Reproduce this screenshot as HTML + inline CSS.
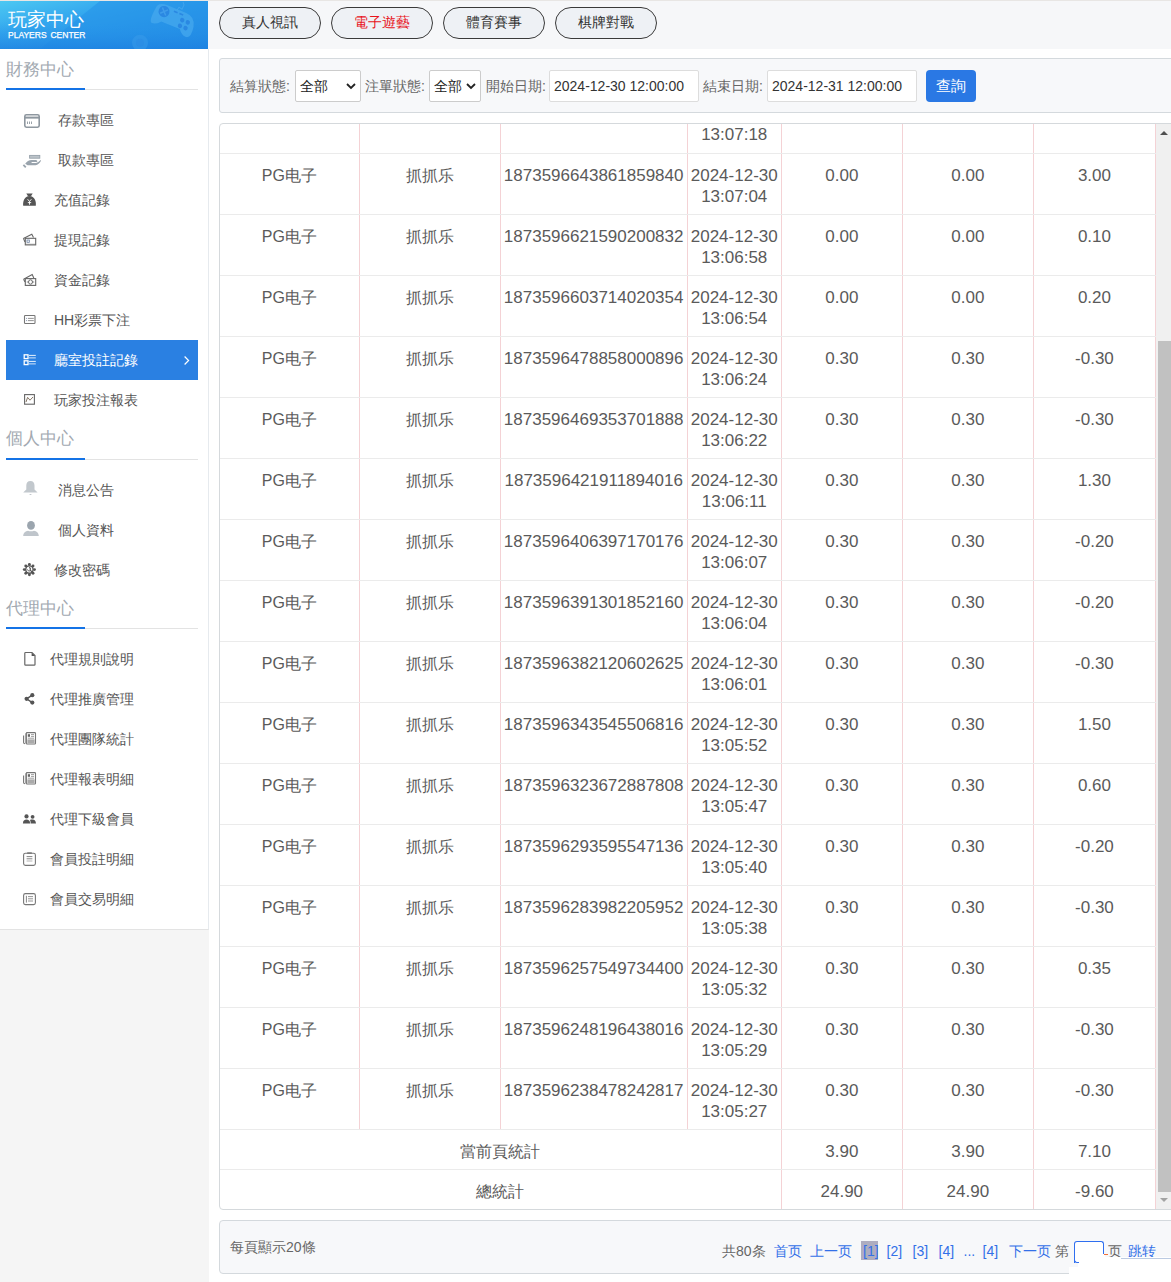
<!DOCTYPE html>
<html><head><meta charset="utf-8">
<style>
*{margin:0;padding:0;box-sizing:border-box}
html,body{width:1171px;height:1282px;overflow:hidden;background:#fff;font-family:"Liberation Sans",sans-serif;color:#555}
.abs{position:absolute}
#topline{left:0;top:0;width:1171px;height:1px;background:#e8e6e4}
#logo{left:0;top:1px;width:208px;height:48px;background:#2a8ee6;overflow:hidden}
#logo .t1{position:absolute;left:8px;top:8px;font-size:19px;color:#fff;line-height:22px;letter-spacing:0px}
#logo .t2{position:absolute;left:8px;top:29px;font-size:8.5px;color:#fff;line-height:10px;word-spacing:1.5px;-webkit-text-stroke:0.25px #fff}
#nav{left:208px;top:1px;width:963px;height:48px;background:#f6f7f9}
.pill{position:absolute;top:6px;width:102px;height:32px;border:1px solid #3a3a3a;border-radius:16px;background:#eef1f5;font-size:14px;line-height:29px;text-align:center;color:#333}
#side{left:0;top:49px;width:209px;height:881px;background:#fff;border-right:1px solid #e6eaee;border-bottom:1px solid #e3e3e3}
#sidebot{left:0;top:930px;width:209px;height:352px;background:#f5f5f5}
#main{left:209px;top:48px;width:962px;height:1234px;background:#fff}
.sec{position:absolute;left:6px;font-size:17px;color:#a2a9b1;line-height:20px}
.secline{position:absolute;left:6px;width:192px;height:2px;border-bottom:1px solid #e3e3e3}
.secline i{position:absolute;left:0;top:0;width:79px;height:2px;background:#1473e6}
.it{position:absolute;left:0;width:208px;height:20px;font-size:14px;line-height:20px;color:#555}
.it span{position:absolute;top:0}
.it svg{position:absolute}
#active{left:6px;top:340px;width:192px;height:40px;background:#2a80e2}
#filter{left:219px;top:58px;width:960px;height:55px;background:#f7f8fa;border:1px solid #d4d9dd;border-radius:3px}
.lbl{position:absolute;top:19px;font-size:14px;line-height:16px;color:#666}
.sel{position:absolute;top:11px;height:32px;border:1px solid #ccc;border-radius:2px;background:#fff;font-size:14px;line-height:30px;color:#222;padding-left:4px}
.inp{position:absolute;top:11px;width:150px;height:32px;border:1px solid #ddd;border-radius:2px;background:#fff;font-size:14px;line-height:30px;color:#333;padding-left:4px}
#btn{position:absolute;left:706px;top:11px;width:50px;height:32px;border-radius:4px;background:#2a78e4;color:#fff;font-size:15px;line-height:32px;text-align:center}
#tbox{left:219px;top:123px;width:970px;height:1087px;border:1px solid #d5d9dc;border-radius:4px;overflow:hidden;background:#fff}
#tinner{position:absolute;left:0;top:-32px;width:936px}
table{border-collapse:collapse;table-layout:fixed;width:936px}
td{border-right:1px solid #f4d2d5;border-bottom:1px solid #ebebeb;text-align:center;font-size:16px;line-height:21px;color:#5a5a5a;padding:0}
tr.r td{height:61px;vertical-align:top;padding-top:11px}
tr.s td{height:40px;vertical-align:top;padding-top:11px}
.n{font-size:17px}
#sb{left:1156px;top:124px;width:15px;height:1085px;background:#f0f0f0}
#thumb{left:1158px;top:341px;width:13px;height:851px;background:#c1c1c1}
#pager{left:219px;top:1220px;width:970px;height:54px;background:#f7f8fa;border:1px solid #d4d9dd;border-radius:4px}
.pg{position:absolute;top:22px;font-size:14px;line-height:16px;color:#666}
.lk{color:#3370e8}
</style></head><body>
<div class="abs" id="topline"></div>
<div class="abs" id="logo">
  <svg class="abs" style="left:0;top:0" width="208" height="48" viewBox="0 0 208 47" preserveAspectRatio="none">
    <defs><linearGradient id="lg" x1="0" y1="0" x2="1" y2="1"><stop offset="0" stop-color="#4cc8f2"/><stop offset="0.35" stop-color="#33a6ee"/><stop offset="1" stop-color="#1f7fe0"/></linearGradient>
    <linearGradient id="lg2" x1="0" y1="0" x2="0" y2="1"><stop offset="0" stop-color="#2798ea" stop-opacity="0"/><stop offset="1" stop-color="#1c7ee0" stop-opacity="0.6"/></linearGradient></defs>
    <rect width="208" height="47" fill="url(#lg)"/>
    <polygon points="100,0 208,0 208,47 40,47" fill="#2492e8" opacity="0.55"/>
    <rect y="20" width="208" height="27" fill="url(#lg2)"/>
    <g transform="rotate(22 172 20)">
      <path d="M152,14 q0,-7 10,-7 h20 q10,0 12,10 q2,12 -4,12 q-4,0 -8,-5 h-20 q-4,5 -8,5 q-4,0 -2,-15z" fill="#46a8ee" opacity="0.75"/>
      <circle cx="161" cy="14" r="5.5" fill="#2a88e2"/>
      <path d="M158,11 l6,6 M164,11 l-6,6" stroke="#3e9cea" stroke-width="1.5"/>
      <path d="M170,10 h4 M176,10 h4" stroke="#2a88e2" stroke-width="1.6"/>
      <circle cx="181" cy="15" r="2.2" fill="#2a88e2"/><circle cx="187" cy="15" r="2.2" fill="#2a88e2"/>
      <circle cx="181" cy="21" r="2.2" fill="#2a88e2"/><circle cx="187" cy="21" r="2.2" fill="#2a88e2"/>
    </g>
    <path d="M177,9 l2,-3 l3,2 l2,-4 l-1,-3" fill="none" stroke="#4aa8ee" stroke-width="1" opacity="0.7"/>
    <circle cx="140" cy="41" r="8" fill="#3a9cea" opacity="0.5"/>
    <circle cx="140" cy="41" r="4" fill="#2a8ae4" opacity="0.5"/>
  </svg>
  <div class="t1">玩家中心</div>
  <div class="t2">PLAYERS CENTER</div>
</div>
<div class="abs" id="nav">
  <div class="pill" style="left:11px">真人視訊</div>
  <div class="pill" style="left:123px;color:#e8141b">電子遊藝</div>
  <div class="pill" style="left:235px">體育賽事</div>
  <div class="pill" style="left:347px">棋牌對戰</div>
</div>
<div class="abs" id="side"></div>
<div class="abs" id="sidebot"></div>
<div class="sec" style="top:60px">財務中心</div>
<div class="secline" style="top:88px"><i></i></div>
<div class="abs" id="active"></div>
<div class="it" style="top:110px"><span style="left:58px">存款專區</span></div>
<div class="it" style="top:150px"><span style="left:58px">取款專區</span></div>
<div class="it" style="top:190px"><span style="left:54px">充值記錄</span></div>
<div class="it" style="top:230px"><span style="left:54px">提現記錄</span></div>
<div class="it" style="top:270px"><span style="left:54px">資金記錄</span></div>
<div class="it" style="top:310px"><span style="left:54px">HH彩票下注</span></div>
<div class="it" style="top:350px;color:#fff"><span style="left:54px">廳室投註記錄</span></div>
<div class="it" style="top:390px"><span style="left:54px">玩家投注報表</span></div>
<div class="sec" style="top:429px">個人中心</div>
<div class="secline" style="top:458px"><i></i></div>
<div class="it" style="top:480px"><span style="left:58px">消息公告</span></div>
<div class="it" style="top:520px"><span style="left:58px">個人資料</span></div>
<div class="it" style="top:560px"><span style="left:54px">修改密碼</span></div>
<div class="sec" style="top:599px">代理中心</div>
<div class="secline" style="top:627px"><i></i></div>
<div class="it" style="top:649px"><span style="left:50px">代理規則說明</span></div>
<div class="it" style="top:689px"><span style="left:50px">代理推廣管理</span></div>
<div class="it" style="top:729px"><span style="left:50px">代理團隊統計</span></div>
<div class="it" style="top:769px"><span style="left:50px">代理報表明細</span></div>
<div class="it" style="top:809px"><span style="left:50px">代理下級會員</span></div>
<div class="it" style="top:849px"><span style="left:50px">會員投註明細</span></div>
<div class="it" style="top:889px"><span style="left:50px">會員交易明細</span></div>
<svg class="abs" style="left:0;top:0" width="208" height="930" viewBox="0 0 208 930">
 <!-- card -->
 <rect x="24.8" y="114.8" width="14.4" height="12.4" rx="1.6" fill="none" stroke="#8e979f" stroke-width="1.6"/>
 <rect x="24.8" y="116.6" width="14.4" height="2" fill="#8e979f"/>
 <path d="M27.5 121.5v2.5M29.5 121.5v2.5M31.5 121.5v2.5" stroke="#8e979f" stroke-width="0.9"/>
 <!-- hand -->
 <rect x="29.6" y="155.4" width="10.2" height="2.8" fill="#bcc3c9" stroke="#97a2ab" stroke-width="0.9"/>
 <path d="M25.2 163.8 Q27.6 160 31.6 159.9 H36.2 Q38.2 160.6 37 162 H31.6 V162.9 H36 Q38.4 162.6 40.6 160 L41 160.8 Q39 164.8 35.6 165.2 H27.6z" fill="#9aa4ad"/>
 <path d="M23.4 164.9 l2.4 2.4" stroke="#9aa4ad" stroke-width="1.8"/>
 <!-- money bag -->
 <path d="M26.3 193.4 h6.4 l-1.6 2.6 h-3.2z" fill="#555"/>
 <path d="M29.5 196 C24.5 196.3 22.6 201.2 23.2 205.8 h12.6 C36.4 201.2 34.5 196.3 29.5 196z" fill="#555"/>
 <path d="M27.6 199.2 l1.9 2.3 1.9-2.3 M29.5 201.5 v3.2 M27.8 202.6 h3.4" fill="none" stroke="#fff" stroke-width="0.9"/>
 <!-- withdraw cards -->
 <path d="M23.4 238.4 L31.8 234.2 L33.5 237.6" fill="none" stroke="#666" stroke-width="1.1"/>
 <path d="M23.4 238.4 L25 242" fill="none" stroke="#666" stroke-width="1.1"/>
 <rect x="25.3" y="238.3" width="10.4" height="6.6" fill="#fff" stroke="#666" stroke-width="1.1"/>
 <rect x="27" y="240" width="2.3" height="2.3" fill="none" stroke="#6a7fa0" stroke-width="0.8"/>
 <path d="M26 244.3h9.2" stroke="#888" stroke-width="0.9"/>
 <!-- fund cards -->
 <path d="M23.6 279.2 L32.2 274.6 L33.8 278" fill="none" stroke="#666" stroke-width="1.1"/>
 <path d="M23.6 279.2 L25 282" fill="none" stroke="#666" stroke-width="1.1"/>
 <rect x="25.3" y="278.6" width="10.4" height="6.8" fill="#fff" stroke="#666" stroke-width="1.1"/>
 <ellipse cx="30.5" cy="282" rx="2" ry="2.2" fill="none" stroke="#666" stroke-width="1"/>
 <path d="M26.8 282h1.2M33 282h1.2" stroke="#777" stroke-width="0.9"/>
 <!-- lottery list -->
 <rect x="24.5" y="315.5" width="10.5" height="8" rx="0.8" fill="none" stroke="#777" stroke-width="1.1"/>
 <path d="M28 318.4h5.8M28 320.6h5.8" stroke="#888" stroke-width="0.9"/>
 <path d="M26.2 318.4h0.9M26.2 320.6h0.9" stroke="#6a7fa0" stroke-width="0.9"/>
 <!-- active list -->
 <rect x="24.2" y="354.8" width="3.8" height="3.8" fill="none" stroke="#fff" stroke-width="1.3"/>
 <rect x="24.2" y="360.8" width="3.8" height="3.8" fill="none" stroke="#fff" stroke-width="1.3"/>
 <path d="M29 355.4h6.8M29 361.4h6.8" stroke="#fff" stroke-width="0.9"/>
 <path d="M29 357.9h6.8M29 363.9h6.8" stroke="#e6effa" stroke-width="0.9"/>
 <path d="M184.6 356.5 l4 4 -4 4" fill="none" stroke="#fff" stroke-width="1.2"/>
 <!-- chart -->
 <rect x="24.6" y="394.6" width="9.8" height="9.6" fill="none" stroke="#666" stroke-width="1.1"/>
 <path d="M26 402 L27.6 397.4 L30 400.2 L33 397" fill="none" stroke="#776655" stroke-width="0.9"/>
 <!-- bell -->
 <path d="M30.4 481 C27.6 481 26.3 483 26.3 485.5 V489.6 L23.2 492.4 H37.6 L34.5 489.6 V485.5 C34.5 483 33.2 481 30.4 481z" fill="#c2c8cd"/>
 <path d="M29 494 h3 l-1.5 1z" fill="#b8bec4"/>
 <!-- person -->
 <ellipse cx="31" cy="525.4" rx="3.9" ry="4.4" fill="#9ba5ae"/>
 <path d="M23.2 536 C23.4 532.6 25.5 531.4 28 530.8 Q31 531.8 34 530.8 C36.5 531.4 38.6 532.6 38.8 536z" fill="#bfc5cb"/>
 <!-- gear -->
 <circle cx="34.50" cy="569.60" r="1.45" fill="#555"/><circle cx="33.01" cy="573.21" r="1.45" fill="#555"/><circle cx="29.40" cy="574.70" r="1.45" fill="#555"/><circle cx="25.79" cy="573.21" r="1.45" fill="#555"/><circle cx="24.30" cy="569.60" r="1.45" fill="#555"/><circle cx="25.79" cy="565.99" r="1.45" fill="#555"/><circle cx="29.40" cy="564.50" r="1.45" fill="#555"/><circle cx="33.01" cy="565.99" r="1.45" fill="#555"/>
 <circle cx="29.4" cy="569.6" r="3.7" fill="#fff" stroke="#555" stroke-width="1.4"/>
 <path d="M29.2 567.4 q1.8 0.9 0.9 2.6 l3.6 3.8" fill="none" stroke="#555" stroke-width="1.2"/>
 <path d="M27.4 569.4 q0.4 2 2.6 1.6" fill="none" stroke="#666" stroke-width="1"/>
 <!-- doc -->
 <path d="M25.6 652.5 H32 L35 655.5 V664.4 Q35 665.2 34.2 665.2 H25.6 Q24.8 665.2 24.8 664.4 V653.3 Q24.8 652.5 25.6 652.5z" fill="none" stroke="#666" stroke-width="1.2"/>
 <path d="M31.6 652.5 V655.9 H35z" fill="#555"/>
 <!-- share -->
 <circle cx="32.3" cy="695.2" r="2.1" fill="#555"/>
 <circle cx="26.6" cy="698.8" r="2.1" fill="#555"/>
 <circle cx="32.3" cy="702.6" r="2.1" fill="#555"/>
 <path d="M32.3 695.2 L26.6 698.8 L32.3 702.6" fill="none" stroke="#555" stroke-width="1.4"/>
 <!-- newspaper x2 -->
 <g id="np">
 <path d="M26 733.2 V743.6 M23.6 735.4 V742.6 Q23.6 743.8 25 743.8" fill="none" stroke="#777" stroke-width="1.1"/>
 <rect x="26.3" y="732.6" width="9.2" height="11.4" rx="0.8" fill="none" stroke="#777" stroke-width="1.1"/>
 <rect x="27.8" y="734.2" width="2.2" height="2.6" fill="#666"/>
 <path d="M31 734.6h3M31 736.4h3M27.8 738.2h6.2" stroke="#888" stroke-width="0.8"/>
 <rect x="27.4" y="739.4" width="7.2" height="3.8" fill="#aaa"/>
 </g>
 <use href="#np" transform="translate(0 40)"/>
 <!-- people -->
 <circle cx="26.5" cy="816.4" r="2.1" fill="#555"/>
 <circle cx="32.6" cy="816.8" r="1.9" fill="#555"/>
 <path d="M22.9 823.4 C23 820.4 24.4 819.4 26.5 819.4 C28.6 819.4 30 820.4 30.1 823.4z" fill="#555"/>
 <path d="M30.6 823.4 C30.7 821.4 30.4 820.6 29.9 819.9 C30.6 819.4 31.5 819.4 32.6 819.4 C34.6 819.4 35.8 820.6 36 823.4z" fill="#555"/>
 <!-- clipboard -->
 <rect x="23.6" y="853.2" width="11.8" height="12.2" rx="1.8" fill="none" stroke="#777" stroke-width="1.1"/>
 <rect x="27.2" y="852.3" width="4.6" height="1.6" fill="#777"/>
 <path d="M26.6 856.6h5.8M26.6 858.8h5.8" stroke="#777" stroke-width="0.9"/>
 <path d="M26.6 861h5.8" stroke="#aaa" stroke-width="0.9"/>
 <!-- list box -->
 <rect x="23.6" y="893.6" width="11.8" height="11" rx="1.8" fill="none" stroke="#777" stroke-width="1.1"/>
 <path d="M26.4 895.8v6.8" stroke="#777" stroke-width="0.9"/>
 <path d="M28 896.6h5M28 898.8h5M28 901h5" stroke="#888" stroke-width="0.9"/>
</svg>
<div class="abs" id="filter">
  <div class="lbl" style="left:10px">結算狀態:</div>
  <div class="sel" style="left:75px;width:66px">全部<svg style="position:absolute;left:50px;top:12px" width="10" height="7" viewBox="0 0 10 7"><path d="M1 1l4 4 4-4" fill="none" stroke="#222" stroke-width="1.8"/></svg></div>
  <div class="lbl" style="left:145px">注單狀態:</div>
  <div class="sel" style="left:209px;width:52px">全部<svg style="position:absolute;left:36px;top:12px" width="10" height="7" viewBox="0 0 10 7"><path d="M1 1l4 4 4-4" fill="none" stroke="#222" stroke-width="1.8"/></svg></div>
  <div class="lbl" style="left:266px">開始日期:</div>
  <div class="inp" style="left:329px">2024-12-30 12:00:00</div>
  <div class="lbl" style="left:483px">結束日期:</div>
  <div class="inp" style="left:547px">2024-12-31 12:00:00</div>
  <div id="btn">查詢</div>
</div>
<div class="abs" id="tbox"><div id="tinner"><table>
<colgroup><col style="width:139px"><col style="width:141px"><col style="width:187px"><col style="width:94px"><col style="width:121px"><col style="width:131px"><col style="width:122px"></colgroup>
<tr class="r"><td></td><td></td><td></td><td class="n">2024-12-30<br>13:07:18</td><td></td><td></td><td></td></tr>
<tr class="r"><td>PG电子</td><td>抓抓乐</td><td class="n">1873596643861859840</td><td class="n">2024-12-30<br>13:07:04</td><td class="n">0.00</td><td class="n">0.00</td><td class="n">3.00</td></tr>
<tr class="r"><td>PG电子</td><td>抓抓乐</td><td class="n">1873596621590200832</td><td class="n">2024-12-30<br>13:06:58</td><td class="n">0.00</td><td class="n">0.00</td><td class="n">0.10</td></tr>
<tr class="r"><td>PG电子</td><td>抓抓乐</td><td class="n">1873596603714020354</td><td class="n">2024-12-30<br>13:06:54</td><td class="n">0.00</td><td class="n">0.00</td><td class="n">0.20</td></tr>
<tr class="r"><td>PG电子</td><td>抓抓乐</td><td class="n">1873596478858000896</td><td class="n">2024-12-30<br>13:06:24</td><td class="n">0.30</td><td class="n">0.30</td><td class="n">-0.30</td></tr>
<tr class="r"><td>PG电子</td><td>抓抓乐</td><td class="n">1873596469353701888</td><td class="n">2024-12-30<br>13:06:22</td><td class="n">0.30</td><td class="n">0.30</td><td class="n">-0.30</td></tr>
<tr class="r"><td>PG电子</td><td>抓抓乐</td><td class="n">1873596421911894016</td><td class="n">2024-12-30<br>13:06:11</td><td class="n">0.30</td><td class="n">0.30</td><td class="n">1.30</td></tr>
<tr class="r"><td>PG电子</td><td>抓抓乐</td><td class="n">1873596406397170176</td><td class="n">2024-12-30<br>13:06:07</td><td class="n">0.30</td><td class="n">0.30</td><td class="n">-0.20</td></tr>
<tr class="r"><td>PG电子</td><td>抓抓乐</td><td class="n">1873596391301852160</td><td class="n">2024-12-30<br>13:06:04</td><td class="n">0.30</td><td class="n">0.30</td><td class="n">-0.20</td></tr>
<tr class="r"><td>PG电子</td><td>抓抓乐</td><td class="n">1873596382120602625</td><td class="n">2024-12-30<br>13:06:01</td><td class="n">0.30</td><td class="n">0.30</td><td class="n">-0.30</td></tr>
<tr class="r"><td>PG电子</td><td>抓抓乐</td><td class="n">1873596343545506816</td><td class="n">2024-12-30<br>13:05:52</td><td class="n">0.30</td><td class="n">0.30</td><td class="n">1.50</td></tr>
<tr class="r"><td>PG电子</td><td>抓抓乐</td><td class="n">1873596323672887808</td><td class="n">2024-12-30<br>13:05:47</td><td class="n">0.30</td><td class="n">0.30</td><td class="n">0.60</td></tr>
<tr class="r"><td>PG电子</td><td>抓抓乐</td><td class="n">1873596293595547136</td><td class="n">2024-12-30<br>13:05:40</td><td class="n">0.30</td><td class="n">0.30</td><td class="n">-0.20</td></tr>
<tr class="r"><td>PG电子</td><td>抓抓乐</td><td class="n">1873596283982205952</td><td class="n">2024-12-30<br>13:05:38</td><td class="n">0.30</td><td class="n">0.30</td><td class="n">-0.30</td></tr>
<tr class="r"><td>PG电子</td><td>抓抓乐</td><td class="n">1873596257549734400</td><td class="n">2024-12-30<br>13:05:32</td><td class="n">0.30</td><td class="n">0.30</td><td class="n">0.35</td></tr>
<tr class="r"><td>PG电子</td><td>抓抓乐</td><td class="n">1873596248196438016</td><td class="n">2024-12-30<br>13:05:29</td><td class="n">0.30</td><td class="n">0.30</td><td class="n">-0.30</td></tr>
<tr class="r"><td>PG电子</td><td>抓抓乐</td><td class="n">1873596238478242817</td><td class="n">2024-12-30<br>13:05:27</td><td class="n">0.30</td><td class="n">0.30</td><td class="n">-0.30</td></tr>
<tr class="s"><td colspan="4">當前頁統計</td><td class="n">3.90</td><td class="n">3.90</td><td class="n">7.10</td></tr>
<tr class="s"><td colspan="4">總統計</td><td class="n">24.90</td><td class="n">24.90</td><td class="n">-9.60</td></tr></table></div></div>
<div class="abs" id="sb"></div>
<div class="abs" id="thumb"></div>
<svg class="abs" style="left:1160px;top:130px" width="8" height="6" viewBox="0 0 8 6"><path d="M0 5h8L4 1z" fill="#505050"/></svg>
<svg class="abs" style="left:1160px;top:1197px" width="8" height="6" viewBox="0 0 8 6"><path d="M0 1h8L4 5z" fill="#a3a3a3"/></svg>
<div class="abs" id="pager">
  <div class="pg" style="left:10px;top:18px">每頁顯示20條</div>
  <div class="pg" style="left:502px">共80条</div>
  <div class="pg lk" style="left:554px">首页</div>
  <div class="pg lk" style="left:590px">上一页</div>
  <div class="abs" style="left:641px;top:20px;width:17px;height:19px;background:#aeadbf"></div>
  <div class="pg lk" style="left:643px">[1]</div>
  <div class="pg lk" style="left:666.5px">[2]</div>
  <div class="pg lk" style="left:692.5px">[3]</div>
  <div class="pg lk" style="left:718.5px">[4]</div>
  <div class="pg lk" style="left:743.5px">...</div>
  <div class="pg lk" style="left:762.5px">[4]</div>
  <div class="pg lk" style="left:789px">下一页</div>
  <div class="pg" style="left:835px">第</div>
  <div class="pg" style="left:888px">页</div>
  <div class="pg lk" style="left:908px">跳转</div>
</div>
<div class="abs" style="left:1078px;top:1257px;width:93px;height:25px;background:#fff"></div>
<div class="abs" style="left:1069px;top:1267px;width:20px;height:15px;background:#fff"></div>
<div class="abs" style="left:1121px;top:1258px;width:50px;height:1px;background:#bccbe2"></div>
<div class="abs" style="left:1074px;top:1241px;width:30px;height:22px;border:1.5px solid #2f6ff0;border-bottom:none;border-radius:3px 3px 0 0;background:#fff"></div>
<div class="abs" style="left:1102.5px;top:1254px;width:2px;height:9px;background:#fff"></div>
<div class="abs" style="left:1074px;top:1259px;width:5px;height:4px;border-left:1.5px solid #2f6ff0;border-bottom:1.5px solid #2f6ff0;border-radius:0 0 0 3px"></div>
<div class="abs" style="left:1104px;top:1254px;width:4px;height:1px;background:#f0703a"></div>
</body></html>
